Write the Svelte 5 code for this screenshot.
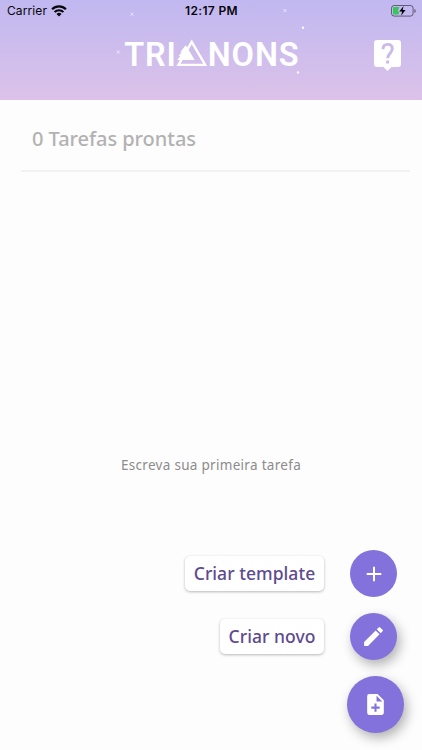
<script>
  const stars = [
    { x: 132, y: 14.3 }, { x: 118.3, y: 52 }, { x: 285, y: 10.5 },
    { x: 303, y: 27.7, dot: true }, { x: 298, y: 72.4, dot: true }
  ];
</script>

<main>
  <header>
    <svg class="stars" width="422" height="100" aria-hidden="true">
      {#each stars as s}
        {#if s.dot}
          <circle cx={s.x} cy={s.y} r="1.2" fill="#fff" opacity=".9" />
        {:else}
          <path d="M{s.x - 1.5} {s.y - 1.5}l3 3m0-3l-3 3" stroke="#fff" stroke-width=".8" opacity=".8" />
        {/if}
      {/each}
    </svg>
    <div class="status">
      <div class="carrier">
        <span>Carrier</span>
        <svg width="16" height="12" viewBox="0 0 16 12" fill="none" stroke="#08060c">
          <path d="M1.1 4.3a9.8 9.8 0 0 1 13.8 0" stroke-width="2.2" />
          <path d="M3.6 7a6.2 6.2 0 0 1 8.8 0" stroke-width="2" />
          <path d="M8 11.6L5.5 9a3.6 3.6 0 0 1 5 0z" fill="#08060c" stroke="none" />
        </svg>
      </div>
      <strong>12:17 PM</strong>
      <svg class="battery" width="25" height="12" viewBox="0 0 25 12">
        <rect x=".5" y=".5" width="21.6" height="10.6" rx="2.7" fill="none" stroke="#000" stroke-opacity=".5" />
        <path d="M23.4 4v4q1.4-.6 1.4-2t-1.4-2z" fill="#000" fill-opacity=".5" />
        <path d="M3.2 2h5.2L6.6 6.4h1.6L7.6 9.6H3.2Q2 9.6 2 8.4V3.2Q2 2 3.2 2z" fill="#35c759" />
        <path d="M12.6.9L8.3 6.5h2.8l-1 4.2 4.4-5.8h-2.8z" fill="#000" />
      </svg>
    </div>
    <div class="brand">
      <svg class="logo" width="182" height="48" viewBox="-4 -8 182 48" fill="#fff">
        <text x="-.7" y="28" textLength="51.5" lengthAdjust="spacing">TRI</text>
        <path fill-rule="evenodd" d="M66.7 1.6L82.2 28.100H51.400zM66.700 6.200L55.500 25.800h22.700z" />
        <path d="M60.600 7.300l2 2.600 7 12.200H52.200l3.100-4-1.600-.1 3-3.700-1.500-.1z" />
        <text x="82.700" y="28" textLength="91" lengthAdjust="spacing">NONS</text>
      </svg>
      <svg class="help" width="28" height="32" viewBox="0 0 28 32">
        <path d="M3 0h21q3 0 3 3v21q0 3-3 3h-6.400l-4.100 4-4.100-4H3q-3 0-3-3V3q0-3 3-3z" fill="#fff" />
        <path d="M9 9.200c0-3 1.800-4.800 4.600-4.800s4.700 1.700 4.700 4.400c0 4.100-4.700 4.700-4.700 9.500" fill="none" stroke="#cbb9e8" stroke-width="2.900" />
        <rect x="12.100" y="20.500" width="3" height="3" fill="#cbb9e8" />
      </svg>
    </div>
  </header>

  <h1>0 Tarefas prontas</h1>
  <p>Escreva sua primeira tarefa</p>

  <div class="actions">
    <div class="row">
      <span class="label one">Criar template</span>
      <button class="fab flat" aria-label="Criar template">
        <svg width="24" height="24" viewBox="0 0 24 24"><path d="M19.300 13H13v6.300h-2V13H4.700v-2H11V4.700h2V11h6.300z" /></svg>
      </button>
    </div>
    <div class="row">
      <span class="label two">Criar novo</span>
      <button class="fab" aria-label="Criar novo">
        <svg width="25" height="25" viewBox="0 0 24 24"><path d="M3 17.250V21h3.750L17.810 9.940l-3.750-3.750zM20.710 7.040a1 1 0 0 0 0-1.410l-2.340-2.340a1 1 0 0 0-1.410 0l-1.830 1.830 3.750 3.750z" /></svg>
      </button>
    </div>
    <button class="fab main" aria-label="Adicionar">
      <svg width="25" height="25" viewBox="0 0 24 24"><path d="M14 2H6a2 2 0 0 0-2 2v16c0 1.100.89 2 1.990 2H18a2 2 0 0 0 2-2V8zm2 14h-3v3h-2v-3H8v-2h3v-3h2v3h3zm-3-7V3.500L18.500 9z" /></svg>
    </button>
  </div>
</main>

<style>
  :global(body) { margin: 0; }
  main {
    box-sizing: border-box; width: 422px; height: 750px; overflow: hidden;
    display: flex; flex-direction: column; background: #fdfdfd;
    font-family: "Noto Sans", sans-serif;
  }
  header {
    position: relative; flex: none; height: 100px; color: #08060c;
    background: linear-gradient(#c0b8f0, #dcc2e9);
  }
  .stars { position: absolute; inset: 0; }
  .status {
    height: 22px; padding: 0 6px 0 7px; display: grid;
    grid-template-columns: 1fr auto 1fr; align-items: center;
    font: 12px/22px Inter, sans-serif;
  }
  .carrier { display: flex; align-items: center; gap: 4px; letter-spacing: .1px; }
  .status strong { font-weight: 600; letter-spacing: .35px; }
  .battery { justify-self: end; }
  .brand { display: flex; align-items: flex-start; padding: 8px 20px 0 121px; justify-content: space-between; }
  .logo text { font: 600 32.5px Roboto, sans-serif; }
  .help { margin-top: 10px; }
  svg { display: block; flex: none; }
  h1 {
    box-sizing: border-box; height: 72px; margin: 0 12.5px 0 21px; padding: 24px 0 0 11px;
    border-bottom: 2px solid #f1f1f1; color: #b2b2b2;
    font-size: 20px; line-height: 30px; font-weight: 500; letter-spacing: -.05px;
  }
  p {
    margin: 283px 0 0; text-align: center; color: #8c8c8c;
    font-size: 13.5px; line-height: 20px; letter-spacing: .3px;
  }
  .actions {
    flex: 1; display: flex; flex-direction: column; align-items: flex-end;
    padding: 75px 18.500px 0 0;
  }
  .row { display: flex; align-items: center; gap: 26px; height: 47px; padding-right: 6.500px; margin-bottom: 16px; }
  .label {
    box-sizing: border-box; height: 35px; border-radius: 5px; background: #fff; color: #5d4a91;
    font-size: 17.500px; line-height: 35px; font-weight: 500; text-align: center; white-space: nowrap;
    box-shadow: 0 1px 3px rgba(0, 0, 0, .28); letter-spacing: .05px;
  }
  .one { width: 139px; }
  .two { width: 104px; }
  .fab {
    width: 47px; height: 47px; padding: 0; border: 0; border-radius: 50%;
    display: grid; place-items: center; flex: none;
    background: #8371dc; box-shadow: 3px 5px 12px rgba(0, 0, 0, .3);
  }
  .flat { box-shadow: none; }
  .main { width: 57px; height: 57px; }
  .fab svg { fill: #fff; }
</style>
